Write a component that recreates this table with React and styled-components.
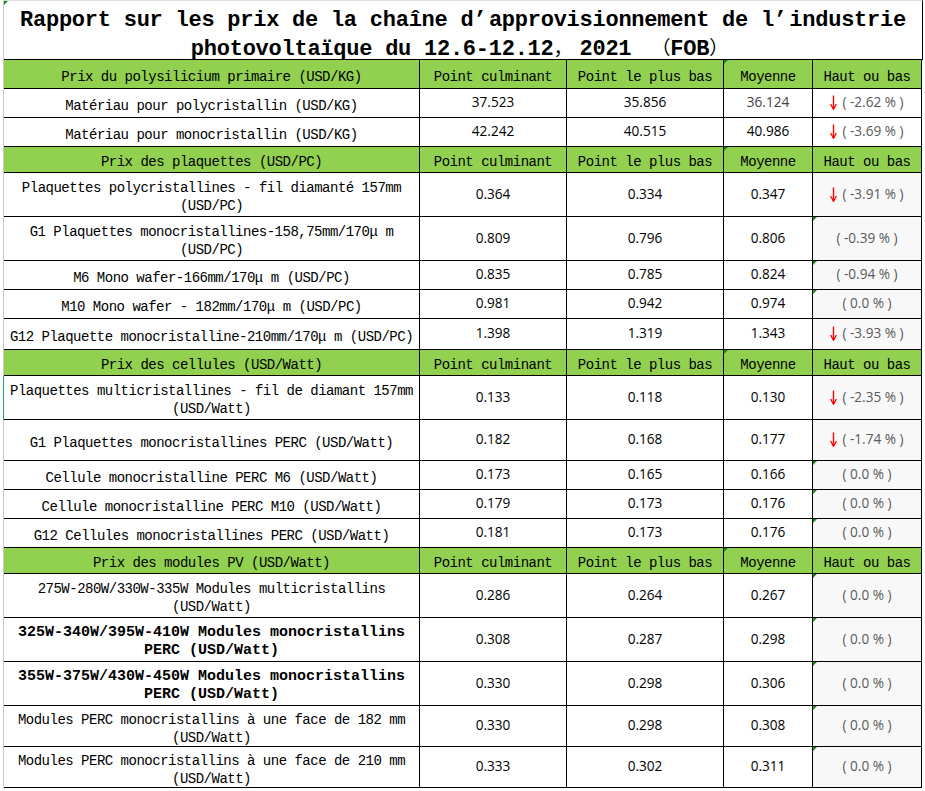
import React from "react";
import styled, { createGlobalStyle, css } from "styled-components";

const COLS = "416px 147px 157px 89px 109px";

const sections = [
  {
    title: "Prix du polysilicium primaire (USD/KG)",
    h: 29,
    shade: false,
    rows: [
      { label: ["Matériau pour polycristallin (USD/KG)"], h: 29, hi: "37.523", lo: "35.856", avg: "36.124", chg: "-2.62 %", down: true, muted: true },
      { label: ["Matériau pour monocristallin (USD/KG)"], h: 29, hi: "42.242", lo: "40.515", avg: "40.986", chg: "-3.69 %", down: true },
    ],
  },
  {
    title: "Prix des plaquettes (USD/PC)",
    h: 26,
    shade: true,
    rows: [
      { label: ["Plaquettes polycristallines - fil diamanté 157mm", "(USD/PC)"], h: 44, hi: "0.364", lo: "0.334", avg: "0.347", chg: "-3.91 %", down: true },
      { label: ["G1 Plaquettes monocristallines-158,75mm/170μm", "(USD/PC)"], h: 44, hi: "0.809", lo: "0.796", avg: "0.806", chg: "-0.39 %" },
      { label: ["M6 Mono wafer-166mm/170μm (USD/PC)"], h: 29, hi: "0.835", lo: "0.785", avg: "0.824", chg: "-0.94 %" },
      { label: ["M10 Mono wafer - 182mm/170μm (USD/PC)"], h: 29, hi: "0.981", lo: "0.942", avg: "0.974", chg: "0.0 %" },
      { label: ["G12 Plaquette monocristalline-210mm/170μm (USD/PC)"], h: 31, hi: "1.398", lo: "1.319", avg: "1.343", chg: "-3.93 %", down: true },
    ],
  },
  {
    title: "Prix des cellules (USD/Watt)",
    h: 26,
    shade: true,
    rows: [
      { label: ["Plaquettes multicristallines - fil de diamant 157mm", "(USD/Watt)"], h: 44, hi: "0.133", lo: "0.118", avg: "0.130", chg: "-2.35 %", down: true, mark: true },
      { label: ["G1 Plaquettes monocristallines PERC (USD/Watt)"], h: 41, hi: "0.182", lo: "0.168", avg: "0.177", chg: "-1.74 %", down: true },
      { label: ["Cellule monocristalline PERC M6 (USD/Watt)"], h: 29, hi: "0.173", lo: "0.165", avg: "0.166", chg: "0.0 %" },
      { label: ["Cellule monocristalline PERC M10 (USD/Watt)"], h: 29, hi: "0.179", lo: "0.173", avg: "0.176", chg: "0.0 %" },
      { label: ["G12 Cellules monocristallines PERC (USD/Watt)"], h: 29, hi: "0.181", lo: "0.173", avg: "0.176", chg: "0.0 %" },
    ],
  },
  {
    title: "Prix des modules PV (USD/Watt)",
    h: 26,
    shade: true,
    rows: [
      { label: ["275W-280W/330W-335W Modules multicristallins", "(USD/Watt)"], h: 44, hi: "0.286", lo: "0.264", avg: "0.267", chg: "0.0 %" },
      { label: ["325W-340W/395W-410W Modules monocristallins", "PERC (USD/Watt)"], h: 44, bold: true, hi: "0.308", lo: "0.287", avg: "0.298", chg: "0.0 %" },
      { label: ["355W-375W/430W-450W Modules monocristallins", "PERC (USD/Watt)"], h: 44, bold: true, hi: "0.330", lo: "0.298", avg: "0.306", chg: "0.0 %" },
      { label: ["Modules PERC monocristallins à une face de 182 mm", "(USD/Watt)"], h: 41, hi: "0.330", lo: "0.298", avg: "0.308", chg: "0.0 %" },
      { label: ["Modules PERC monocristallins à une face de 210 mm", "(USD/Watt)"], h: 41, hi: "0.333", lo: "0.302", avg: "0.311", chg: "0.0 %" },
    ],
  },
];

// wide glyphs (μ) are drawn full width like in the original sheet
const fmt = (s) =>
  s.split("μ").flatMap((part, i) =>
    i === 0 ? [part] : [<Wide key={i} $w="16px">μ</Wide>, part]
  );

const DownArrow = () => (
  <svg width="7" height="15" viewBox="0 0 7 15">
    <path d="M3.5 0.5 V14" stroke="#ff0000" strokeWidth="1.4" fill="none" />
    <path d="M0.6 9 L3.5 14.3 L6.4 9" stroke="#ff0000" strokeWidth="1.3" fill="none" />
  </svg>
);

const App = () => {
  return (
    <>
      <GlobalStyle />
      <Sheet>
        <Table>
          <Title $flag>
            <div>
              Rapport sur les prix de la chaîne d<Wide $w="15.5px">’</Wide>approvisionnement de l
              <Wide $w="15.5px">’</Wide>industrie
            </div>
            <div>
              photovoltaïque du 12.6-12.12<Wide $w="26px" $cjk>，</Wide>2021 <Wide $w="26px" $cjk $right>（</Wide>FOB
              <Wide $w="26px" $cjk>）</Wide>
            </div>
          </Title>

          {sections.map((sec) => (
            <React.Fragment key={sec.title}>
              <Row $h={sec.h}>
                <HeadCell>{sec.title}</HeadCell>
                <HeadCell>Point culminant</HeadCell>
                <HeadCell>Point le plus bas</HeadCell>
                <HeadCell $flag>Moyenne</HeadCell>
                <HeadCell>Haut ou bas</HeadCell>
              </Row>
              {sec.rows.map((r, i) => (
                <Row key={i} $h={r.h} $mark={r.mark}>
                  <LabelCell $bold={r.bold}>
                    {r.label.map((line, j) => (
                      <div key={j}>{fmt(line)}</div>
                    ))}
                  </LabelCell>
                  <NumCell>{r.hi}</NumCell>
                  <NumCell>{r.lo}</NumCell>
                  <NumCell $muted={r.muted}>{r.avg}</NumCell>
                  <ChangeCell $shade={sec.shade} $flag={!r.down}>
                    {r.down && <DownArrow />}
                    <span>( {r.chg} )</span>
                  </ChangeCell>
                </Row>
              ))}
            </React.Fragment>
          ))}
        </Table>
      </Sheet>
    </>
  );
};
export default App;

const GlobalStyle = createGlobalStyle`
  html, body {
    margin: 0;
    padding: 0;
    background: #fff;
  }
  body {
    font-family: "Liberation Mono", "Noto Sans CJK SC", monospace;
    color: #000;
  }
`;

const flagCss = css`
  &::before {
    content: "";
    position: absolute;
    top: 0;
    left: 0;
    border-top: 4px solid #1d8a1d;
    border-right: 4px solid transparent;
  }
`;

const Sheet = styled.div`
  width: 925px;
  height: 791px;
  box-sizing: border-box;
  padding-left: 3px;
  overflow: hidden;
  background: #fff;
`;

const Table = styled.div`
  width: 919px;
  border-left: 1px solid #c9c9d6;
`;

const Title = styled.div`
  position: relative;
  box-sizing: border-box;
  height: 60px;
  padding-top: 5px;
  border-top: 1px solid #dcdce4;
  border-right: 1px solid #000;
  border-bottom: 1px solid #000;
  text-align: center;
  font-weight: bold;
  font-size: 22px;
  letter-spacing: -0.25px;
  line-height: 29px;
  white-space: pre;
  ${(p) => p.$flag && flagCss}

  & > div {
    height: 29px;
  }
`;

const Wide = styled.span`
  display: inline-block;
  width: ${(p) => p.$w};
  line-height: 1;
  text-align: ${(p) => (p.$right ? "right" : "left")};
  ${(p) =>
    p.$cjk &&
    css`
      font-family: "Noto Sans CJK SC", sans-serif;
      font-size: 19px;
      font-weight: normal;
      line-height: 0.9;
    `}
`;

const Row = styled.div`
  display: grid;
  grid-template-columns: ${COLS};
  grid-template-rows: 100%;
  height: ${(p) => p.$h}px;
  ${(p) => p.$mark && "box-shadow: -1px 0 0 #22a06b;"}
`;

const Cell = styled.div`
  position: relative;
  box-sizing: border-box;
  display: flex;
  align-items: center;
  justify-content: center;
  border-right: 1px solid #000;
  border-bottom: 1px solid #000;
  overflow: hidden;
  ${(p) => p.$flag && flagCss}
`;

const HeadCell = styled(Cell)`
  background: #92d050;
  padding-top: 5px;
  font-size: 14px;
  letter-spacing: -0.5px;
  line-height: 18px;
  white-space: nowrap;
`;

const LabelCell = styled(Cell)`
  flex-direction: column;
  padding-top: 5px;
  text-align: center;
  white-space: nowrap;
  font-size: ${(p) => (p.$bold ? "15px" : "14px")};
  font-weight: ${(p) => (p.$bold ? "bold" : "normal")};
  letter-spacing: ${(p) => (p.$bold ? "0" : "-0.5px")};
  line-height: 18px;
`;

const NumCell = styled(Cell)`
  padding-bottom: 2px;
  font-family: "Open Sans", "Noto Sans", sans-serif;
  font-size: 13.6px;
  line-height: 18px;
  color: ${(p) => (p.$muted ? "#404040" : "#000")};
`;

const ChangeCell = styled(NumCell)`
  gap: 5px;
  background: ${(p) => (p.$shade ? "#f8f8f8" : "#fff")};
  color: #5a5a5a;

  svg {
    flex: none;
    margin-top: 1px;
  }
`;
